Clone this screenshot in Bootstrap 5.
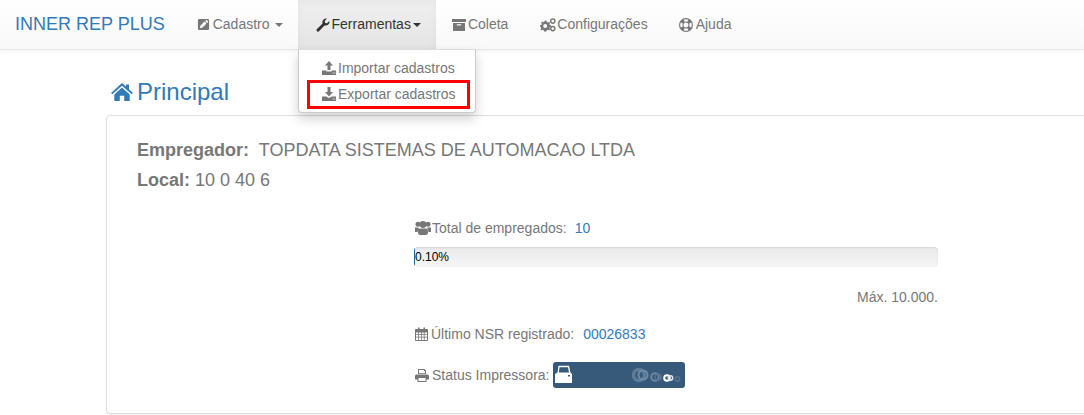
<!DOCTYPE html>
<html lang="pt-BR">
<head>
    <meta charset="UTF-8">
    <meta name="viewport" content="width=device-width, initial-scale=1.0">
    <title>Inner Rep Plus</title>
    <link href="https://cdn.jsdelivr.net/npm/bootstrap@5.3.0/dist/css/bootstrap.min.css" rel="stylesheet">
    <style>
        html, body { overflow: hidden; }
        body { font-family: "Liberation Sans", Arial, sans-serif; font-size: 14px; color: #777; background: #fff; height: 415px; }
        .ico { fill: currentColor; flex: none; display: inline-block; }

        .top-bar { height: 50px; background: linear-gradient(to bottom, #fff 0, #f8f8f8 100%); border-bottom: 1px solid #e7e7e7; box-shadow: 0 1px 4px rgba(0,0,0,.06); padding: 0; position: relative; }
        .top-brand { color: #337ab7; font-size: 18px; padding: 0 17px 0 15px; line-height: 49px; text-decoration: none; }
        .top-link { color: #777; height: 49px; padding: 0 15px; text-decoration: none; gap: 2px; white-space: nowrap; }
        .top-link.link-cad { gap: 3px; }
        .top-link.is-open { color: #333; padding-left: 18px; background: linear-gradient(to bottom, #f0f0f0 0, #e4e4e4 100%); box-shadow: inset 0 3px 9px rgba(0,0,0,.04); }
        .top-link.link-col { margin-left: 1px; padding-right: 17px; }
        .top-link.link-cfg { gap: 1px; }
        .top-link.link-help { margin-left: 1px; gap: 3px; }
        .top-caret { display: inline-block; width: 0; height: 0; border-top: 4px solid currentColor; border-left: 4px solid transparent; border-right: 4px solid transparent; }
        .link-cad .top-caret { margin-left: 2px; }

        .tool-menu { position: absolute; left: 298px; top: 49px; width: 178px; height: 64px; background: #fff; border: 1px solid #ccc; border-top-color: #ddd; border-radius: 0 0 4px 4px; box-shadow: 0 6px 12px rgba(0,0,0,.175); padding-top: 5px; z-index: 10; }
        .tool-item { height: 26px; padding-left: 23px; color: #777; gap: 2px; text-decoration: none; white-space: nowrap; }
        .tool-mark { outline: 3px solid #f00; outline-offset: -3px; position: absolute; left: 8px; top: 30px; width: 163px; height: 29px; }

        .page-wrap { padding-left: 106px; }
        .page-title { color: #337ab7; font-size: 24px; line-height: 26px; margin: 29px 0 10px 5px; font-weight: 400; gap: 4px; }
        .main-panel { width: 1100px; height: 299px; border: 1px solid #ddd; border-radius: 4px; box-shadow: 0 1px 1px rgba(0,0,0,.05); padding: 24px 30px 0; }
        .owner-line { font-size: 18px; line-height: 20px; margin-bottom: 10px; color: #777; }
        .owner-line b { margin-right: 5px; }
        .owner-line.local-line b { margin-right: 0; }
        .stats-box { width: 524px; margin: 28px 0 0 277px; }
        .stat-line { line-height: 20px; gap: 1px; white-space: nowrap; }
        .stat-num { color: #337ab7; margin-left: 7px; }
        .row-nsr .stat-num { margin-left: 8px; }
        .stat-ico-users { margin-left: 1px; }
        .stat-ico-small { margin: 0 2px 0 1px; }
        .usage-bar { height: 20px; margin-top: 9px; background: linear-gradient(to bottom, #ebebeb 0, #f5f5f5 100%); border-radius: 4px; font-size: 12px; color: #000; line-height: 20px; overflow: hidden; white-space: nowrap; box-shadow: inset 0 1px 2px rgba(0,0,0,.1); }
        .usage-fill { width: 1px; background: #286090; height: 20px; flex: none; }
        .max-note { text-align: right; margin-top: 20px; line-height: 20px; }
        .row-nsr { margin-top: 17px; }
        .row-printer { margin-top: 18px; }
        .printer-chip { width: 132px; height: 26px; background: #375a7a; border-radius: 3px; margin-left: 2px; }
    </style>
</head>
<body>
    <svg width="0" height="0" class="position-absolute">
        <symbol id="i-edit" viewBox="0 0 14 14"><path fill-rule="evenodd" d="M2.500 1h9A1.500 1.500 0 0 1 13 2.500v9a1.500 1.500 0 0 1-1.500 1.500h-9A1.500 1.500 0 0 1 1 11.500v-9A1.500 1.500 0 0 1 2.500 1zM3 11l3-.8 4.200-4.200-2.200-2.200L3.800 8zM8.700 3.200l2.200 2.200.9-.9a.7.7 0 0 0 0-1l-1.200-1.200a.7.7 0 0 0-1 0z"/></symbol>
        <symbol id="i-wrench" viewBox="0 0 14 14"><path d="M13.500 3.500a3.800 3.800 0 0 1-5 3.900l-5.300 5.700a1.500 1.500 0 0 1-2.200-2.100l5.600-5.400A3.800 3.800 0 0 1 11 .6L8.700 2.900l.4 2 2 .4 2.200-2.300z"/></symbol>
        <symbol id="i-box" viewBox="0 0 14 14"><path d="M0 1h14v3H0zM1 5h12v8H1zM4.800 6.200v1.300h4.400V6.200z" fill-rule="evenodd"/></symbol>
        <symbol id="i-cogs" viewBox="0 0 16 14"><path fill-rule="evenodd" d="M5.500 2.500l1 .2.300 1.300 1.200.5 1.100-.7 1 1-.7 1.100.5 1.200 1.300.3v1.400l-1.300.3-.5 1.200.7 1.100-1 1-1.100-.7-1.200.5-.3 1.300H4.100l-.3-1.300-1.200-.5-1.100.7-1-1 .7-1.100-.5-1.200L0 8.600V7.200l1.300-.3.5-1.200-.7-1.100 1-1 1.100.7 1.200-.5.300-1.300zM5.200 5.900a2 2 0 1 0 0 4 2 2 0 0 0 0-4z"/><path fill-rule="evenodd" d="M12.800.3a2.800 2.800 0 1 1 0 5.600 2.800 2.800 0 0 1 0-5.600zm0 1.400a1.400 1.400 0 1 0 0 2.800 1.400 1.400 0 0 0 0-2.800z"/><path fill-rule="evenodd" d="M12.800 7.800a2.800 2.800 0 1 1 0 5.600 2.800 2.800 0 0 1 0-5.600zm0 1.400a1.400 1.400 0 1 0 0 2.800 1.400 1.400 0 0 0 0-2.800z"/></symbol>
        <symbol id="i-help" viewBox="0 0 14 14"><path fill-rule="evenodd" d="M7 0a7 7 0 1 1 0 14A7 7 0 0 1 7 0zM4.600 1.700l1 2.100a3.500 3.500 0 0 1 2.800 0l1-2.100a6 6 0 0 0-4.800 0zM1.700 4.600a6 6 0 0 0 0 4.800l2.100-1a3.500 3.500 0 0 1 0-2.800zM12.300 4.600l-2.100 1a3.500 3.500 0 0 1 0 2.800l2.100 1a6 6 0 0 0 0-4.800zM5.600 10.200l-1 2.100a6 6 0 0 0 4.800 0l-1-2.100a3.500 3.500 0 0 1-2.800 0zM7 4.500a2.500 2.500 0 1 0 0 5 2.500 2.500 0 0 0 0-5z"/></symbol>
        <symbol id="i-up" viewBox="0 0 14 14"><path fill-rule="evenodd" d="M7 0l4 4.500H8.500V9h-3V4.500H3zM0 9.500h4.500V10.500h5V9.500H14V14H0zM10.500 11.500v1h1v-1zm1.800 0v1h1v-1z"/></symbol>
        <symbol id="i-down" viewBox="0 0 14 14"><path fill-rule="evenodd" d="M5.500 0h3v5H11L7 9.500 3 5h2.500zM0 9.500h4.200L7 11l2.800-1.500H14V14H0zM10.500 11.500v1h1v-1zm1.800 0v1h1v-1z"/></symbol>
        <symbol id="i-home" viewBox="0 0 22 18"><path d="M11 0l4 3.600V1.500h3v4.800L22 10l-1.300 1.300L11 2.700 1.300 11.300 0 10z"/><path d="M11 4.500l7.700 6.900V18h-5.500v-5.300H8.800V18H3.300v-6.600z"/></symbol>
        <symbol id="i-users" viewBox="0 0 16 14"><circle cx="3" cy="3.200" r="2.500"/><circle cx="13" cy="3.200" r="2.500"/><circle cx="8" cy="3.500" r="3.400"/><path d="M0 6.500h3.300a3.500 3.500 0 0 0 1 1.900C3 9 2.500 10.200 2.500 11H0zM16 6.500h-3.300a3.500 3.500 0 0 1-1 1.900c1.300.6 1.800 1.800 1.800 2.600H16zM5 7.500h6c1.300 0 2 1.600 2 3.800 0 1.700-.9 2.700-2 2.700H5c-1.100 0-2-1-2-2.700 0-2.200.7-3.800 2-3.800z"/></symbol>
        <symbol id="i-cal" viewBox="0 0 13 14"><path fill-rule="evenodd" d="M1 2h2V.5h1.500V2h4V.5H10V2h2a1 1 0 0 1 1 1v10a1 1 0 0 1-1 1H1a1 1 0 0 1-1-1V3a1 1 0 0 1 1-1zM1 5.500v1.800h2.200V5.500zm3 0v1.800h2V5.500zm2.800 0v1.800h2V5.500zm2.800 0v1.800H12V5.500zM1 8v1.800h2.200V8zm3 0v1.800h2V8zm2.800 0v1.800h2V8zm2.800 0v1.800H12V8zM1 10.500V13h2.200v-2.500zm3 0V13h2v-2.500zm2.800 0V13h2v-2.500zm2.800 0V13H12v-2.500z"/></symbol>
        <symbol id="i-print" viewBox="0 0 14 13"><path fill-rule="evenodd" d="M3 0h6.500L11 1.500V5H3zM4 1v3.200h6V2.200H8.800V1zM1.500 5.500h11A1.500 1.500 0 0 1 14 7v3.500h-2.500V13h-9v-2.500H0V7a1.500 1.500 0 0 1 1.500-1.500zM3.500 9v3h7V9z"/></symbol>
    </svg>

    <nav class="top-bar d-flex align-items-center">
        <a class="top-brand" href="#">INNER REP PLUS</a>
        <a class="top-link link-cad d-flex align-items-center" href="#"><svg class="ico" width="13" height="13"><use href="#i-edit"/></svg>Cadastro<span class="top-caret"></span></a>
        <a class="top-link is-open d-flex align-items-center" href="#"><svg class="ico" width="14" height="14"><use href="#i-wrench"/></svg>Ferramentas<span class="top-caret"></span></a>
        <a class="top-link link-col d-flex align-items-center" href="#"><svg class="ico" width="14" height="14"><use href="#i-box"/></svg>Coleta</a>
        <a class="top-link link-cfg d-flex align-items-center" href="#"><svg class="ico" width="16" height="14"><use href="#i-cogs"/></svg>Configurações</a>
        <a class="top-link link-help d-flex align-items-center" href="#"><svg class="ico" width="14" height="14"><use href="#i-help"/></svg>Ajuda</a>

        <div class="tool-menu">
            <a class="tool-item d-flex align-items-center" href="#"><svg class="ico" width="14" height="14"><use href="#i-up"/></svg>Importar cadastros</a>
            <a class="tool-item d-flex align-items-center" href="#"><svg class="ico" width="14" height="14"><use href="#i-down"/></svg>Exportar cadastros</a>
            <div class="tool-mark"></div>
        </div>
    </nav>

    <div class="page-wrap">
        <h1 class="page-title d-flex align-items-center"><svg class="ico" width="22" height="18"><use href="#i-home"/></svg>Principal</h1>
        <div class="main-panel">
            <div class="owner-line"><b>Empregador:</b> TOPDATA SISTEMAS DE AUTOMACAO LTDA</div>
            <div class="owner-line local-line"><b>Local:</b> 10 0 40 6</div>
            <div class="stats-box">
                <div class="stat-line d-flex align-items-center"><svg class="ico stat-ico-users" width="16" height="14"><use href="#i-users"/></svg>Total de empregados:<span class="stat-num">10</span></div>
                <div class="usage-bar d-flex"><div class="usage-fill"></div>0.10%</div>
                <div class="max-note">Máx. 10.000.</div>
                <div class="stat-line row-nsr d-flex align-items-center"><svg class="ico stat-ico-small" width="13" height="14"><use href="#i-cal"/></svg>Último NSR registrado:<span class="stat-num">00026833</span></div>
                <div class="stat-line row-printer d-flex align-items-center">
                    <svg class="ico stat-ico-small" width="14" height="13"><use href="#i-print"/></svg>Status Impressora:
                    <div class="printer-chip d-flex align-items-center">
                        <svg width="132" height="26" viewBox="0 0 132 26">
                            <path fill="none" stroke="#fff" stroke-width="1.300" d="M5 12l1-7.500h9.500L17 12"/>
                            <path fill="#fff" fill-rule="evenodd" d="M4.500 10.500h13l1.500 1.500v9H2v-9zM15 13v1.500h2V13z"/>
                            <g fill="none">
                                <circle cx="86" cy="13" r="5.500" stroke="#5d7c99" stroke-width="3.500"/>
                                <circle cx="90" cy="13" r="4.500" stroke="#6f8ba5" stroke-width="2"/>
                                <circle cx="102" cy="15" r="3.800" stroke="#6a87a2" stroke-width="2"/>
                                <circle cx="105" cy="15" r="3" stroke="#56758f" stroke-width="1.500"/>
                                <circle cx="114" cy="16" r="2.800" stroke="#fff" stroke-width="2"/>
                                <circle cx="117.500" cy="16" r="2.200" stroke="#dfe6ec" stroke-width="1.500"/>
                                <circle cx="124.500" cy="17" r="2.200" stroke="#557490" stroke-width="1.500"/>
                            </g>
                        </svg>
                    </div>
                </div>
            </div>
        </div>
    </div>

    <script src="https://cdn.jsdelivr.net/npm/bootstrap@5.3.0/dist/js/bootstrap.bundle.min.js"></script>
</body>
</html>
